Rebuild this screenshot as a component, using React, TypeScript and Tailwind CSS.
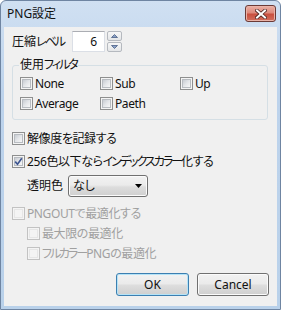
import React from "react";

const FONT = '"Noto Sans", "Noto Sans CJK JP", sans-serif';

function K({ children }: { children: React.ReactNode }) {
  return <span className="tracking-[-2px]">{children}</span>;
}

function CheckBox({ checked = false, disabled = false }: { checked?: boolean; disabled?: boolean }) {
  return (
    <div
      className={
        "relative w-[13px] h-[13px] shrink-0 border " +
        (disabled ? "border-[#c2c2c2] bg-[#f4f4f4]" : "border-[#8e8f8f] bg-[#f4f4f4]")
      }
    >
      <div
        className={
          "absolute left-[1px] top-[1px] w-[9px] h-[9px] border " +
          (disabled
            ? "border-[#e6e6e6] bg-[#f4f4f4]"
            : "border-[#b8bcc1] bg-gradient-to-br from-[#c8ccd2] via-[#e4e6e9] to-[#f7f7f7]")
        }
      />
      {checked && (
        <svg className="absolute left-[1px] top-[1px]" width="9" height="9" viewBox="0 0 9 9">
          <path d="M1.2 4.6 L3.5 7.2 L7.8 1.2" fill="none" stroke="#3c5490" strokeWidth="1.6" />
        </svg>
      )}
    </div>
  );
}

function CheckRow({
  children,
  checked,
  disabled,
  className = "",
}: {
  children: React.ReactNode;
  checked?: boolean;
  disabled?: boolean;
  className?: string;
}) {
  return (
    <div className={"flex items-center h-[13px] gap-[2px] " + className}>
      <CheckBox checked={checked} disabled={disabled} />
      <span
        className={
          "whitespace-nowrap leading-[16px] tracking-[-0.4px] [font-feature-settings:'palt'] " +
          (disabled ? "text-[#a0a0a0]" : "text-[#111]")
        }
      >
        {children}
      </span>
    </div>
  );
}

function SpinArrow({ up }: { up: boolean }) {
  return (
    <div className="w-[15px] h-[10px] border border-[#b5b9bf] rounded-[2px] bg-[linear-gradient(#f7f7f7,#e4e6e8)] flex items-center justify-center">
      <svg width="7" height="4" viewBox="0 0 7 4">
        {up ? (
          <path d="M0.5 3.5 L3.5 0.5 L6.5 3.5 Z" fill="#8aa0c4" stroke="#4a5f86" strokeWidth="0.8" />
        ) : (
          <path d="M0.5 0.5 L3.5 3.5 L6.5 0.5 Z" fill="#8aa0c4" stroke="#4a5f86" strokeWidth="0.8" />
        )}
      </svg>
    </div>
  );
}

function Button({ label, isDefault = false, className = "" }: { label: string; isDefault?: boolean; className?: string }) {
  return (
    <div
      className={
        "h-[23px] rounded-[3px] border flex items-center justify-center bg-[linear-gradient(#f2f2f2_0%,#ebebeb_45%,#dddddd_55%,#cfcfcf_100%)] " +
        (isDefault
          ? "border-[#3c7fb1] shadow-[inset_0_0_0_1px_#b5e3f7]"
          : "border-[#707070] shadow-[inset_0_0_0_1px_#fbfbfb]") +
        " " +
        className
      }
    >
      <span className="leading-[16px] text-[#111]">{label}</span>
    </div>
  );
}

export default function App() {
  return (
    <div
      className="w-[281px] h-[310px] flex flex-col border border-[#6f85a2] rounded-t-[6px] bg-[linear-gradient(#d0e0f2,#bdd3ec_30%,#b9d1ea)] px-[3px] pb-[3px] text-[12px] text-[#111]"
      style={{ fontFamily: FONT }}
    >
      {/* Title bar */}
      <div className="h-[26px] flex justify-between">
        <div className="pl-[3px] flex items-center h-[26px] leading-[16px] [font-feature-settings:'palt']">PNG設定</div>
        <div className="mt-[4px] mr-[1px] w-[31px] h-[17px] rounded-[3px] border border-[#6b3a36] shadow-[inset_0_0_0_1px_#e9b3a8] bg-[linear-gradient(#eab0a4_0%,#de8a7c_45%,#c9503f_55%,#d26f5e_100%)] flex items-center justify-center">
          <svg width="12" height="10" viewBox="0 0 12 10">
            <path d="M2 1.5 L10 8.5 M10 1.5 L2 8.5" stroke="#4a2320" strokeWidth="3.6" strokeLinecap="square" />
            <path d="M2 1.5 L10 8.5 M10 1.5 L2 8.5" stroke="#ffffff" strokeWidth="2" strokeLinecap="square" />
          </svg>
        </div>
      </div>

      {/* Client area */}
      <div className="flex-1 bg-[#f0f0f0] flex flex-col pl-[8px] pr-[8px] pt-[4px]">
        {/* Compression level */}
        <div className="flex items-center h-[21px]">
          <div className="w-[60px] leading-[16px] whitespace-nowrap [font-feature-settings:'palt']">
            圧縮<K>レベル</K>
          </div>
          <div className="w-[33px] h-[21px] border border-[#dbdfe6] border-t-[#abadb3] bg-white flex items-center justify-end pr-[7px]">
            <span className="leading-[16px]">6</span>
          </div>
          <div className="ml-[2px] flex flex-col gap-[1px]">
            <SpinArrow up />
            <SpinArrow up={false} />
          </div>
        </div>

        {/* Filter group */}
        <div className="relative mt-[13px] w-[256px] h-[55px] border border-[#d5dfe5] rounded-[3px] pt-[11px] pl-[7px]">
          <div className="absolute left-[6px] -top-[9px] px-[1px] bg-[#f0f0f0] leading-[16px] whitespace-nowrap [font-feature-settings:'palt']">
            使用<K>フィルタ</K>
          </div>
          <div className="grid grid-cols-[80px_80px_80px] gap-y-[7px]">
            <CheckRow>None</CheckRow>
            <CheckRow>Sub</CheckRow>
            <CheckRow>Up</CheckRow>
            <CheckRow>Average</CheckRow>
            <CheckRow>Paeth</CheckRow>
          </div>
        </div>

        <CheckRow className="mt-[12px]">解像度を記録する</CheckRow>
        <CheckRow checked className="mt-[10px]">
          256色以下なら<K>インデックスカラー</K>化する
        </CheckRow>

        {/* Transparent color */}
        <div className="mt-[7px] pl-[15px] flex items-center h-[22px]">
          <div className="w-[41px] leading-[16px] [font-feature-settings:'palt']">透明色</div>
          <div className="w-[80px] h-[22px] rounded-[3px] border border-[#707070] shadow-[inset_0_0_0_1px_#fbfbfb] bg-[linear-gradient(#f2f2f2_0%,#ebebeb_45%,#dddddd_55%,#cfcfcf_100%)] flex items-center justify-between pl-[4px] pr-[5px]">
            <span className="leading-[16px] [font-feature-settings:'palt']">なし</span>
            <svg width="7" height="4" viewBox="0 0 7 4">
              <path d="M0 0 L7 0 L3.5 4 Z" fill="#000" />
            </svg>
          </div>
        </div>

        <CheckRow disabled className="mt-[10px]">
          PNGOUTで最適化する
        </CheckRow>
        <CheckRow disabled className="mt-[7px] ml-[15px]">
          最大限の最適化
        </CheckRow>
        <CheckRow disabled className="mt-[7px] ml-[15px]">
          <K>フルカラー</K>PNGの最適化
        </CheckRow>

        {/* Buttons */}
        <div className="mt-[13px] flex justify-end gap-[8px]">
          <Button label="OK" isDefault className="w-[73px]" />
          <Button label="Cancel" className="w-[72px]" />
        </div>
      </div>
    </div>
  );
}
